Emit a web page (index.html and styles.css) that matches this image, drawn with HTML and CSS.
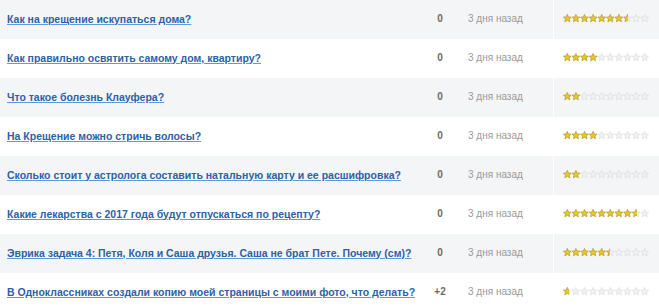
FILE: index.html
```html
<!DOCTYPE html>
<html lang="ru">
<head>
<meta charset="utf-8">
<title>Вопросы</title>
<link rel="stylesheet" href="styles.css">
</head>
<body>
<svg class="defs" width="0" height="0" aria-hidden="true">
  <defs>
    <polygon id="st" points="4.3,0.4 5.4,3.0 8.2,3.2 6.05,5.0 6.75,7.8 4.3,6.3 1.85,7.8 2.55,5.0 0.4,3.2 3.2,3.0"/>
    <symbol id="stars-off" viewBox="0 0 86 9">
      <g fill="#f2f2f2" stroke="#d9d9d9" stroke-width="0.6">
        <use href="#st" x="0"/><use href="#st" x="8.6"/><use href="#st" x="17.2"/><use href="#st" x="25.8"/><use href="#st" x="34.4"/>
        <use href="#st" x="43"/><use href="#st" x="51.6"/><use href="#st" x="60.2"/><use href="#st" x="68.8"/><use href="#st" x="77.4"/>
      </g>
    </symbol>
    <symbol id="stars-on" viewBox="0 0 86 9">
      <g fill="#e6c82a" stroke="#b39412" stroke-width="0.6">
        <use href="#st" x="0"/><use href="#st" x="8.6"/><use href="#st" x="17.2"/><use href="#st" x="25.8"/><use href="#st" x="34.4"/>
        <use href="#st" x="43"/><use href="#st" x="51.6"/><use href="#st" x="60.2"/><use href="#st" x="68.8"/><use href="#st" x="77.4"/>
      </g>
    </symbol>
  </defs>
</svg>
<div class="list">
  <div class="row">
    <div class="title"><a href="#">Как на крещение искупаться дома?</a></div>
    <div class="count">0</div>
    <div class="date">3 дня назад</div>
    <div class="rating"><div class="bar"><svg class="st-off"><use href="#stars-off"/></svg><div class="fill" style="width:64.5px"><svg class="st-on"><use href="#stars-on"/></svg></div></div></div>
  </div>
  <div class="row">
    <div class="title"><a href="#">Как правильно освятить самому дом, квартиру?</a></div>
    <div class="count">0</div>
    <div class="date">3 дня назад</div>
    <div class="rating"><div class="bar"><svg class="st-off"><use href="#stars-off"/></svg><div class="fill" style="width:35px"><svg class="st-on"><use href="#stars-on"/></svg></div></div></div>
  </div>
  <div class="row">
    <div class="title"><a href="#">Что такое болезнь Клауфера?</a></div>
    <div class="count">0</div>
    <div class="date">3 дня назад</div>
    <div class="rating"><div class="bar"><svg class="st-off"><use href="#stars-off"/></svg><div class="fill" style="width:17px"><svg class="st-on"><use href="#stars-on"/></svg></div></div></div>
  </div>
  <div class="row">
    <div class="title"><a href="#">На Крещение можно стричь волосы?</a></div>
    <div class="count">0</div>
    <div class="date">3 дня назад</div>
    <div class="rating"><div class="bar"><svg class="st-off"><use href="#stars-off"/></svg><div class="fill" style="width:34px"><svg class="st-on"><use href="#stars-on"/></svg></div></div></div>
  </div>
  <div class="row">
    <div class="title"><a href="#">Сколько стоит у астролога составить натальную карту и ее расшифровка?</a></div>
    <div class="count">0</div>
    <div class="date">3 дня назад</div>
    <div class="rating"><div class="bar"><svg class="st-off"><use href="#stars-off"/></svg><div class="fill" style="width:17px"><svg class="st-on"><use href="#stars-on"/></svg></div></div></div>
  </div>
  <div class="row">
    <div class="title"><a href="#">Какие лекарства с 2017 года будут отпускаться по рецепту?</a></div>
    <div class="count">0</div>
    <div class="date">3 дня назад</div>
    <div class="rating"><div class="bar"><svg class="st-off"><use href="#stars-off"/></svg><div class="fill" style="width:74px"><svg class="st-on"><use href="#stars-on"/></svg></div></div></div>
  </div>
  <div class="row">
    <div class="title"><a href="#">Эврика задача 4: Петя, Коля и Саша друзья. Саша не брат Пете. Почему (см)?</a></div>
    <div class="count">0</div>
    <div class="date">3 дня назад</div>
    <div class="rating"><div class="bar"><svg class="st-off"><use href="#stars-off"/></svg><div class="fill" style="width:46.5px"><svg class="st-on"><use href="#stars-on"/></svg></div></div></div>
  </div>
  <div class="row">
    <div class="title"><a href="#">В Одноклассниках создали копию моей страницы с моими фото, что делать?</a></div>
    <div class="count">+2</div>
    <div class="date">3 дня назад</div>
    <div class="rating"><div class="bar"><svg class="st-off"><use href="#stars-off"/></svg><div class="fill" style="width:5.5px"><svg class="st-on"><use href="#stars-on"/></svg></div></div></div>
  </div>
</div>
</body>
</html>
```
FILE: styles.css
```css
html, body {
  margin: 0;
  padding: 0;
  background: #ffffff;
}
body {
  font-family: "Liberation Sans", Arial, sans-serif;
  font-size: 10px;
  overflow: hidden;
}
.defs {
  position: absolute;
  width: 0;
  height: 0;
  overflow: hidden;
}
.list {
  display: flex;
  flex-direction: column;
}
.row {
  display: grid;
  grid-template-columns: 418px 44px 91px 1fr;
  height: 39px;
  align-items: center;
}
.row:nth-child(odd) {
  background: #f4f5f7;
}
.row > div {
  height: 100%;
  box-sizing: border-box;
  padding-bottom: 2px;
  display: flex;
  align-items: center;
}
.title {
  padding-left: 7px;
  white-space: nowrap;
}
.title a {
  color: #2c62a6;
  font-weight: bold;
  font-size: 10.5px;
  text-decoration: underline;
  text-decoration-color: #5d9ad6;
  text-underline-offset: 1px;
}
.count {
  justify-content: center;
  font-weight: bold;
  color: #6a6a6a;
}
.date {
  padding-left: 6px;
  color: #9a9a9a;
}
.rating {
  border-left: 1px solid #ffffff;
  padding-left: 9px;
}
.bar {
  position: relative;
  width: 86px;
  height: 9px;
}
.bar svg {
  display: block;
  width: 86px;
  height: 9px;
}
.fill {
  position: absolute;
  left: 0;
  top: 0;
  height: 9px;
  overflow: hidden;
}
```
